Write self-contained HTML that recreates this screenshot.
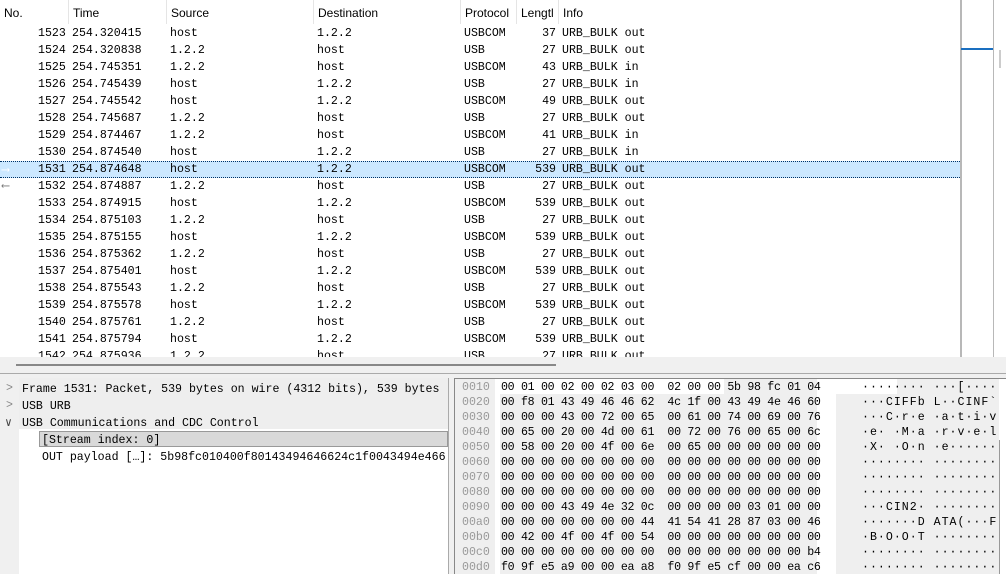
<!DOCTYPE html><html><head><style>
body{margin:0;width:1006px;height:574px;overflow:hidden;background:#fff;position:relative;font-family:"Liberation Mono",monospace;font-size:11.6px;color:#000}
.a{position:absolute;white-space:pre}
.hd{font-family:"Liberation Sans",sans-serif;font-size:12px;top:6px}
.sep{position:absolute;top:0;height:24px;width:1px;background:#e5e5e5}
.r{position:absolute;left:0;width:960px;height:17px}
.r span{position:absolute;top:2px;white-space:pre}
</style></head><body>
<div class="a" style="left:0;top:0;width:960px;height:357px;overflow:hidden">
<div class="a hd" style="left:4px">No.</div><div class="sep" style="left:68px"></div>
<div class="a hd" style="left:73px">Time</div><div class="sep" style="left:166px"></div>
<div class="a hd" style="left:171px">Source</div><div class="sep" style="left:313px"></div>
<div class="a hd" style="left:318px">Destination</div><div class="sep" style="left:460px"></div>
<div class="a hd" style="left:465px">Protocol</div><div class="sep" style="left:516px"></div>
<div class="a hd" style="left:521px">Lengtl</div><div class="sep" style="left:558px"></div>
<div class="a hd" style="left:563px">Info</div>
<div id="rows"></div>
</div>
<div class="a" style="left:960px;top:0;width:2px;height:357px;background:#b8b8b8"></div>
<div class="a" style="left:961px;top:48px;width:32px;height:2px;background:#1a6fc0"></div>
<div class="a" style="left:993px;top:0;width:1px;height:357px;background:#b8b8b8"></div>
<div class="a" style="left:999px;top:50px;width:2px;height:18px;background:#ccc"></div>
<div class="a" style="left:0;top:357px;width:1006px;height:16px;background:#f0f0f0"></div>
<div class="a" style="left:16px;top:364px;width:540px;height:2px;background:#888"></div>
<div class="a" style="left:0;top:373px;width:1006px;height:1px;background:#aaa"></div>
<div class="a" style="left:0;top:374px;width:1006px;height:200px;background:#f0f0f0"></div>
<div class="a" style="left:19px;top:378px;width:429px;height:196px;background:#fff"></div>
<div class="a" style="left:19px;top:378px;width:429px;height:51px;background:#eee"></div>
<div class="a" style="left:39px;top:431px;width:409px;height:16px;background:#d9d9d9;border:1px solid #999;box-sizing:border-box"></div>
<div class="a" style="left:6px;top:382px;color:#888">&gt;</div>
<div class="a" style="left:6px;top:399px;color:#888">&gt;</div>
<div class="a" style="left:5px;top:415px;color:#444">&#x2228;</div>
<div class="a" style="left:22px;top:383px">Frame 1531: Packet, 539 bytes on wire (4312 bits), 539 bytes</div>
<div class="a" style="left:22px;top:400px">USB URB</div>
<div class="a" style="left:22px;top:417px">USB Communications and CDC Control</div>
<div class="a" style="left:42px;top:434px">[Stream index: 0]</div>
<div class="a" style="left:42px;top:451px;width:406px;overflow:hidden">OUT payload […]: 5b98fc010400f80143494646624c1f0043494e466</div>
<div class="a" style="left:448px;top:378px;width:6px;height:196px;background:#f0f0f0;border-left:1px solid #aaa;box-sizing:border-box"></div>
<div class="a" style="left:454px;top:378px;width:552px;height:196px;background:#fff;border-left:1px solid #888;border-top:1px solid #888;box-sizing:border-box"></div>
<div class="a" style="left:455px;top:379px;width:40px;height:195px;background:#efefef"></div>
<div class="a" style="left:500px;top:379px;width:317px;height:195px;background:#efefef"></div>
<div class="a" style="left:836px;top:379px;width:163px;height:195px;background:#efefef"></div>
<div class="a" style="left:500px;top:379px;width:224px;height:15px;background:#fff"></div>
<div class="a" style="left:836px;top:379px;width:61px;height:15px;background:#fff"></div>
<div class="a" style="left:999px;top:440px;width:1px;height:134px;background:#999"></div>
<div id="hex"></div>
<script>
var R=[[1523,"254.320415","host","1.2.2","USBCOM",37,"out"],[1524,"254.320838","1.2.2","host","USB",27,"out"],[1525,"254.745351","1.2.2","host","USBCOM",43,"in"],[1526,"254.745439","host","1.2.2","USB",27,"in"],[1527,"254.745542","host","1.2.2","USBCOM",49,"out"],[1528,"254.745687","1.2.2","host","USB",27,"out"],[1529,"254.874467","1.2.2","host","USBCOM",41,"in"],[1530,"254.874540","host","1.2.2","USB",27,"in"],[1531,"254.874648","host","1.2.2","USBCOM",539,"out"],[1532,"254.874887","1.2.2","host","USB",27,"out"],[1533,"254.874915","host","1.2.2","USBCOM",539,"out"],[1534,"254.875103","1.2.2","host","USB",27,"out"],[1535,"254.875155","host","1.2.2","USBCOM",539,"out"],[1536,"254.875362","1.2.2","host","USB",27,"out"],[1537,"254.875401","host","1.2.2","USBCOM",539,"out"],[1538,"254.875543","1.2.2","host","USB",27,"out"],[1539,"254.875578","host","1.2.2","USBCOM",539,"out"],[1540,"254.875761","1.2.2","host","USB",27,"out"],[1541,"254.875794","host","1.2.2","USBCOM",539,"out"],[1542,"254.875936","1.2.2","host","USB",27,"out"]];
var h="";R.forEach(function(r,i){var y=25+i*17;var sel=r[0]==1531;
h+='<div class="r" style="top:'+y+'px;'+(sel?'background:#cce8ff;border-top:1px dotted #036;border-bottom:1px dotted #036;box-sizing:border-box;':'')+'">'+
(sel?'<span style="left:2px;top:0;color:#fff">⟶</span>':'')+(r[0]==1532?'<span style="left:2px;top:0;color:#777">⟵</span>':'')+
'<span style="left:38px;'+(sel?'top:1px':'')+'">'+r[0]+'</span><span style="left:72px;'+(sel?'top:1px':'')+'">'+r[1]+'</span><span style="left:170px;'+(sel?'top:1px':'')+'">'+r[2]+'</span><span style="left:317px;'+(sel?'top:1px':'')+'">'+r[3]+'</span><span style="left:464px;'+(sel?'top:1px':'')+'">'+r[4]+'</span><span style="right:404px;'+(sel?'top:1px':'')+'">'+r[5]+'</span><span style="left:562px;'+(sel?'top:1px':'')+'">URB_BULK '+r[6]+'</span></div>';});
document.getElementById("rows").innerHTML=h;
var H=[["0010","00 01 00 02 00 02 03 00  02 00 00 5b 98 fc 01 04","········ ···[····"],["0020","00 f8 01 43 49 46 46 62  4c 1f 00 43 49 4e 46 60","···CIFFb L··CINF`"],["0030","00 00 00 43 00 72 00 65  00 61 00 74 00 69 00 76","···C·r·e ·a·t·i·v"],["0040","00 65 00 20 00 4d 00 61  00 72 00 76 00 65 00 6c","·e· ·M·a ·r·v·e·l"],["0050","00 58 00 20 00 4f 00 6e  00 65 00 00 00 00 00 00","·X· ·O·n ·e······"],["0060","00 00 00 00 00 00 00 00  00 00 00 00 00 00 00 00","········ ········"],["0070","00 00 00 00 00 00 00 00  00 00 00 00 00 00 00 00","········ ········"],["0080","00 00 00 00 00 00 00 00  00 00 00 00 00 00 00 00","········ ········"],["0090","00 00 00 43 49 4e 32 0c  00 00 00 00 03 01 00 00","···CIN2· ········"],["00a0","00 00 00 00 00 00 00 44  41 54 41 28 87 03 00 46","·······D ATA(···F"],["00b0","00 42 00 4f 00 4f 00 54  00 00 00 00 00 00 00 00","·B·O·O·T ········"],["00c0","00 00 00 00 00 00 00 00  00 00 00 00 00 00 00 b4","········ ········"],["00d0","f0 9f e5 a9 00 00 ea a8  f0 9f e5 cf 00 00 ea c6","········ ········"]];
var g="";H.forEach(function(l,i){var y=381+i*15;g+='<div class="a" style="left:462px;top:'+y+'px;color:#999">'+l[0]+'</div><div class="a" style="left:501px;top:'+y+'px;letter-spacing:-0.3px">'+l[1]+'</div><div class="a" style="left:862px;top:'+y+'px;letter-spacing:1px">'+l[2]+'</div>';});
document.getElementById("hex").innerHTML=g;
</script>
</body></html>
